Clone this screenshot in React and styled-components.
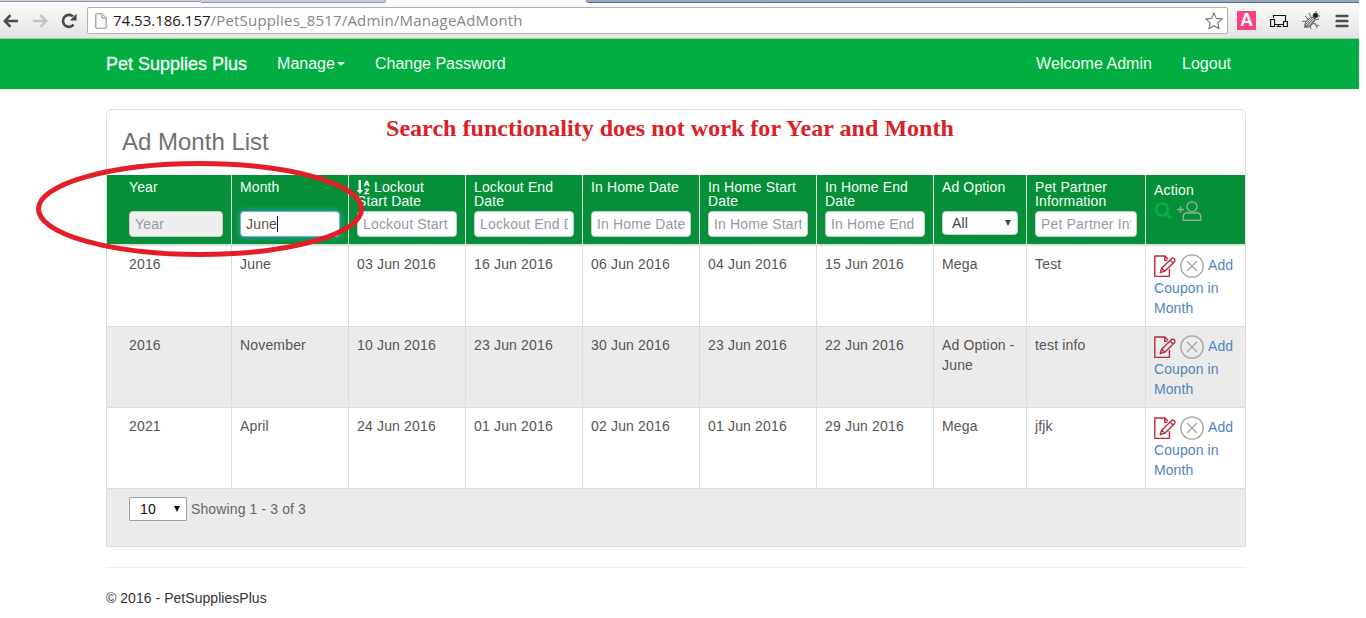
import React from "react";
import styled, { createGlobalStyle, css } from "styled-components";

const GlobalStyle = createGlobalStyle`
  * { box-sizing: border-box; }
  html, body { margin: 0; padding: 0; background: #fff; overflow: hidden; }
  body { font-family: "Liberation Sans", Arial, sans-serif; font-size: 14px; line-height: 20px; color: #555; }
`;

const Page = styled.div`
  position: relative;
  width: 1359px;
  height: 618px;
  overflow: hidden;
`;

/* ---------- browser chrome ---------- */
const TabStrip = styled.div`
  display: flex;
  height: 3px;
  background: #fafafa;
`;
const Tab = styled.div`
  width: ${(p) => p.$width}px;
  height: ${(p) => (p.$inactive ? 2 : 3)}px;
  background: #c6d0dc;
  border-bottom: 1px solid #8e99a8;
  border-right: 1px solid #8e99a8;
  border-bottom-right-radius: 3px;
`;
const StripRest = styled.div`
  flex: 1;
  margin-left: 200px;
  background: #93a8c3;
  border-bottom: 1px solid #5c6c86;
  border-bottom-left-radius: 3px;
`;
const Toolbar = styled.div`
  display: flex;
  align-items: center;
  height: 36px;
  padding: 0 10px 0 3px;
  background: linear-gradient(#fafafa, #e4e4e4);
  border-bottom: 1px solid #b2bdb4;
`;
const NavIcons = styled.div`
  display: flex;
  width: 84px;
  gap: 13px;
  svg { display: block; }
`;
const AddressBar = styled.div`
  display: flex;
  align-items: center;
  width: 1141px;
  height: 27px;
  padding: 0 4px 0 7px;
  background: #fff;
  border: 1px solid #b0b0b0;
  border-radius: 2px;
`;
const Url = styled.span`
  flex: 1;
  margin: -2px 0 0 6px;
  font-family: "Open Sans", "Noto Sans", sans-serif;
  font-size: 15px;
  letter-spacing: ${(p) => p.$track}px;
  color: #858585;
  white-space: nowrap;
`;
const Host = styled.span`
  color: #1a1a1a;
  letter-spacing: 0;
`;
const Extensions = styled.div`
  display: flex;
  flex: 1;
  align-items: center;
  justify-content: space-between;
  margin-left: 9px;
`;
const ABadge = styled.span`
  width: 19px;
  height: 19px;
  background: #fb407f;
  color: #fff;
  font: bold 18px/19px "Liberation Sans", Arial, sans-serif;
  text-align: center;
`;

/* ---------- site navigation ---------- */
const SiteNav = styled.nav`
  display: flex;
  align-items: center;
  height: 50px;
  padding: 0 128px 0 106px;
  background: #00ae42;
  color: #f2fff5;
`;
const NavItem = styled.span`
  display: flex;
  align-items: center;
  margin-right: ${(p) => p.$gap}px;
  font-size: ${(p) => p.$size || 16}px;
  letter-spacing: ${(p) => p.$track || 0}px;
  white-space: nowrap;
`;
const Brand = styled(NavItem)`
  -webkit-text-stroke: 0.3px currentColor;
`;
const Spacer = styled.div`
  flex: 1;
`;
const Caret = styled.i`
  margin-left: 2px;
  border: 4px solid transparent;
  border-top-color: currentColor;
  border-bottom: 0;
`;

/* ---------- content ---------- */
const Container = styled.main`
  width: 1140px;
  margin: 20px 0 0 106px;
`;
const Panel = styled.section`
  border: 1px solid #ddd;
  border-radius: 6px 6px 0 0;
`;
const PanelHead = styled.header`
  display: flex;
  height: 65px;
  padding-left: 15px;
`;
const Title = styled.h1`
  width: 264px;
  margin: 19px 0 0;
  font-size: 24px;
  font-weight: 400;
  line-height: 26px;
  color: #717171;
`;
const Note = styled.p`
  margin: 4px 0 0;
  font: bold 24px/28px "Liberation Serif", "Times New Roman", serif;
  letter-spacing: ${(p) => p.$track}px;
  color: #dc2027;
  white-space: nowrap;
`;
const Row = styled.div`
  display: grid;
  grid-template-columns: 125px repeat(6, 117px) 93px 119px 99px;
  height: 81px;
  border-bottom: 1px solid #ddd;
  background: ${(p) => (p.$striped ? "#ebebeb" : "#fff")};
`;
const HeadRow = styled(Row)`
  height: 71px;
  border-bottom: 2px solid #ddd;
  background: #058f38;
  color: #f4fff6;
`;
const Cell = styled.div`
  min-width: 0;
  padding: 8px;
  letter-spacing: 0.17px;
  border-right: 1px solid #ddd;
  &:first-child { padding-left: 22px; }
  &:last-child { border-right: 0; }
`;
const HeadCell = styled(Cell)`
  padding: 5px 8px 0;
`;
const Label = styled.div`
  height: 31px;
  line-height: 14px;
  letter-spacing: ${(p) => p.$track ?? 0.12}px;
  white-space: pre-line;
`;
const field = css`
  display: flex;
  align-items: center;
  overflow: hidden;
  background: #fff;
  border: 1px solid #ccc;
  border-radius: 4px;
  white-space: nowrap;
`;
const Field = styled.div`
  ${field}
  height: 26px;
  padding: 0 5px;
  color: #999;
  ${(p) => p.$disabled && "background: #eee;"}
  ${(p) =>
    p.$focused &&
    "color: #555; border-color: #66afe9; box-shadow: 0 0 7px rgba(102, 175, 233, 0.6);"}
`;
const FieldText = styled.span`
  overflow: hidden;
  ${(p) => p.$caret && "border-right: 1px solid #222; line-height: 16px;"}
`;
const Select = styled.div`
  ${field}
  justify-content: space-between;
  height: 24px;
  padding: 0 6px 0 9px;
  color: #444;
`;
const PageSize = styled(Select)`
  width: 58px;
  padding: 0 6px 0 10px;
  border-color: #a0a0a0;
  border-radius: 1px;
  color: #111;
`;
const Arrow = styled.i`
  border: 3px solid transparent;
  border-top: 6px solid currentColor;
  border-bottom: 0;
`;
const ActionHead = styled.div`
  svg { display: block; }
`;
const IconPair = styled.div`
  display: flex;
  gap: 4px;
  margin-top: 1px;
`;
const ActionLine = styled.div`
  display: flex;
  align-items: flex-start;
  height: 24px;
  svg { display: block; flex: none; }
`;
const Link = styled.a`
  color: #5084bd;
  letter-spacing: 0.08px;
`;
const InlineLink = styled(Link)`
  margin: 1px 0 0 4px;
`;
const Pager = styled.footer`
  display: flex;
  align-items: flex-start;
  gap: 4px;
  height: 57px;
  padding: 8px 22px;
  background: #ebebeb;
  letter-spacing: 0.12px;
`;
const PagerText = styled.span`
  padding-top: 2px;
  color: #666;
`;
const PageFooter = styled.footer`
  margin-top: 20px;
  padding-top: 20px;
  border-top: 1px solid #eee;
  color: #333;
  letter-spacing: 0.04px;
`;
const Ring = styled.svg`
  position: absolute;
  left: 30px;
  top: 155px;
  pointer-events: none;
`;
const SortMark = styled.svg`
  vertical-align: top;
  overflow: visible;
`;
const RemoveMark = styled.svg`
  margin-left: 3px;
`;

/* ---------- drawings ---------- */
const BackArrow = ({ color }) => (
  <svg width="16" height="16" viewBox="0 0 16 16" fill="none" stroke={color} strokeWidth="2.5">
    <path d="M15 8H2M7.5 2.2 1.8 8l5.7 5.8" />
  </svg>
);
const ForwardArrow = ({ color }) => (
  <svg width="16" height="16" viewBox="0 0 16 16" fill="none" stroke={color} strokeWidth="2.5">
    <path d="M1 8h13M8.5 2.2 14.2 8l-5.7 5.8" />
  </svg>
);
const Reload = () => (
  <svg width="16" height="16" viewBox="0 0 16 16">
    <path d="M12.6 11.7A6 6 0 1 1 12 3.4" fill="none" stroke="#4a4a4a" strokeWidth="2.6" />
    <path d="M15.5 .8v6.7H8.8z" fill="#4a4a4a" />
  </svg>
);
const FileIcon = () => (
  <svg width="12" height="16" viewBox="0 0 12 16" fill="#fafafa" stroke="#8b8b8b">
    <path d="M.8.8h6.4l4 4v10.4H.8zM7 .8V5h4.2" />
  </svg>
);
const Star = () => (
  <svg width="18" height="18" viewBox="0 0 18 18" fill="#fff" stroke="#777" strokeWidth="1.1">
    <path d="m9 .9 2.3 5.5 6 .5-4.5 4 1.3 5.9L9 13.7l-5.1 3.1 1.3-5.9-4.5-4 6-.5z" strokeLinejoin="round" />
  </svg>
);
const Devices = () => (
  <svg width="18" height="14" viewBox="0 0 18 14" fill="none" stroke="#111" strokeWidth="1.1">
    <path d="M3.5 4V1.5h12V7M5 10.5h8M8.5 10.5v2M6.5 12.5h5" />
    <path d="M.6 5.5h4v7h-4zM13.5 7.5h3.9v5h-3.9z" />
  </svg>
);
const Bug = () => (
  <svg width="20" height="20" viewBox="0 0 20 20" fill="none" stroke="#666" strokeWidth="1">
    <path d="M6 11 2 10l-1 1M7 8 4 5M9 15l1 3M5 14l-2 3M12 12l5 3 1-1M13 9l5-1M10 6 8 2M14 12l2 5" />
    <ellipse cx="8.8" cy="11.2" rx="6.4" ry="3.2" transform="rotate(-45 8.8 11.2)" fill="#777" />
    <path d="m5 14 7-7M7 15l6-7M5 12l5-5" stroke="#ddd" />
    <circle cx="14.5" cy="4.5" r="2.4" fill="#222" stroke="#444" />
    <path d="M15 2V0M17 5h2" />
  </svg>
);
const Menu = () => (
  <svg width="14" height="14" viewBox="0 0 14 14" stroke="#4d4d4d" strokeWidth="2.6" strokeLinecap="round">
    <path d="M1.7 2h10.6M1.7 7h10.6M1.7 12h10.6" />
  </svg>
);
const SortIcon = () => (
  <SortMark width="13" height="13" viewBox="0 0 13 13" fill="#fff">
    <path d="M1.6 0h2.4v10h2L2.8 14-.4 10h2z" />
    <text x="6.8" y="6" fontSize="8" fontWeight="700" stroke="#fff" strokeWidth=".3" letterSpacing="0">A</text>
    <text x="7.2" y="14" fontSize="8" fontWeight="700" stroke="#fff" strokeWidth=".3" letterSpacing="0">Z</text>
  </SortMark>
);
const SearchIcon = () => (
  <svg width="19" height="20" viewBox="0 0 19 20" fill="none" stroke="#04b044" strokeWidth="2.7">
    <circle cx="8" cy="8.5" r="6" />
    <path d="m12.2 12.9 4.8 4.7" strokeWidth="3.2" />
  </svg>
);
const AddUser = () => (
  <svg width="26" height="20" viewBox="0 0 26 20" fill="none" stroke="#94ae96" strokeWidth="1.4">
    <path d="M0 8.5h7M3.5 5v7" />
    <circle cx="15" cy="5.7" r="5" />
    <path d="M6.3 19.2v-3.7q0-3.5 3.5-3.8h1.6q3.6 1.4 7.2 0h1.6q3.5.3 3.5 3.8v3.7z" />
  </svg>
);
const EditIcon = () => (
  <svg width="23" height="24" viewBox="0 0 23 24" fill="none" stroke="#b9283c" strokeWidth="1.4" strokeLinejoin="round">
    <path d="M15.4 15v7.4H.8V2h10l3.2 3.2M10.8 2v4.4h2.6" />
    <path d="m6.2 18.6 1.4-4.4L17.6 4.4q1.2-.9 2.6.4t.5 2.6L10.8 17.2zM7.6 14.2l3.2 3M16 6l3.1 3" />
  </svg>
);
const RemoveIcon = () => (
  <RemoveMark width="24" height="24" viewBox="0 0 24 24" fill="none" stroke="#a6a6a6" strokeWidth="1.3">
    <circle cx="12" cy="12" r="11.2" />
    <path d="m7 7 10 10M17 7 7 17" />
  </RemoveMark>
);

/* ---------- data ---------- */
const fields = [
  { label: "Year", hint: "Year", disabled: true },
  { label: "Month", value: "June" },
  { label: "Lockout\nStart Date", hint: "Lockout Start", sorted: true },
  { label: "Lockout End\nDate", hint: "Lockout End Date" },
  { label: "In Home Date", hint: "In Home Date" },
  { label: "In Home Start\nDate", hint: "In Home Start" },
  { label: "In Home End\nDate", hint: "In Home End" },
  { label: "Ad Option", select: "All" },
  { label: "Pet Partner\nInformation", hint: "Pet Partner Information" },
];
const rows = [
  ["2016", "June", "03 Jun 2016", "16 Jun 2016", "06 Jun 2016", "04 Jun 2016", "15 Jun 2016", "Mega", "Test"],
  ["2016", "November", "10 Jun 2016", "23 Jun 2016", "30 Jun 2016", "23 Jun 2016", "22 Jun 2016", "Ad Option - June", "test info"],
  ["2021", "April", "24 Jun 2016", "01 Jun 2016", "02 Jun 2016", "01 Jun 2016", "29 Jun 2016", "Mega", "jfjk"],
];

function Filter({ item }) {
  if (item.select) {
    return (
      <Select>
        {item.select}
        <Arrow />
      </Select>
    );
  }
  return (
    <Field $disabled={item.disabled} $focused={!!item.value}>
      <FieldText $caret={!!item.value}>{item.value || item.hint}</FieldText>
    </Field>
  );
}

export default function App() {
  return (
    <Page>
      <GlobalStyle />
      <TabStrip>
        <Tab $width={201} $inactive />
        <Tab $width={185} />
        <StripRest />
      </TabStrip>
      <Toolbar>
        <NavIcons>
          <BackArrow color="#4a4a4a" />
          <ForwardArrow color="#c4c4c4" />
          <Reload />
        </NavIcons>
        <AddressBar>
          <FileIcon />
          <Url $track={0.18}>
            <Host>74.53.186.157</Host>/PetSupplies_8517/Admin/ManageAdMonth
          </Url>
          <Star />
        </AddressBar>
        <Extensions>
          <ABadge>A</ABadge>
          <Devices />
          <Bug />
          <Menu />
        </Extensions>
      </Toolbar>
      <SiteNav>
        <Brand $size={18} $gap={30}>Pet Supplies Plus</Brand>
        <NavItem $gap={30}>
          Manage
          <Caret />
        </NavItem>
        <NavItem>Change Password</NavItem>
        <Spacer />
        <NavItem $gap={30} $track={0.05}>Welcome Admin</NavItem>
        <NavItem>Logout</NavItem>
      </SiteNav>
      <Container>
        <Panel>
          <PanelHead>
            <Title>Ad Month List</Title>
            <Note $track={0.04}>Search functionality does not work for Year and Month</Note>
          </PanelHead>
          <HeadRow>
            {fields.map((item) => (
              <HeadCell key={item.label}>
                <Label>
                  {item.sorted && <><SortIcon />{" "}</>}
                  {item.label}
                </Label>
                <Filter item={item} />
              </HeadCell>
            ))}
            <HeadCell>
              <ActionHead>
                Action
                <IconPair>
                  <SearchIcon />
                  <AddUser />
                </IconPair>
              </ActionHead>
            </HeadCell>
          </HeadRow>
          {rows.map((cells, r) => (
            <Row key={r} $striped={r === 1}>
              {cells.map((text, c) => (
                <Cell key={c}>{text}</Cell>
              ))}
              <Cell>
                <ActionLine>
                  <EditIcon />
                  <RemoveIcon />
                  <InlineLink>Add</InlineLink>
                </ActionLine>
                <Link>Coupon in Month</Link>
              </Cell>
            </Row>
          ))}
          <Pager>
            <PageSize>
              10
              <Arrow />
            </PageSize>
            <PagerText>Showing 1 - 3 of 3</PagerText>
          </Pager>
        </Panel>
        <PageFooter>© 2016 - PetSuppliesPlus</PageFooter>
      </Container>
      <Ring width="340" height="108" viewBox="0 0 340 108" fill="none">
        <ellipse cx="170" cy="54" rx="161.5" ry="45.5" stroke="#e31e26" strokeWidth="5" />
      </Ring>
    </Page>
  );
}
